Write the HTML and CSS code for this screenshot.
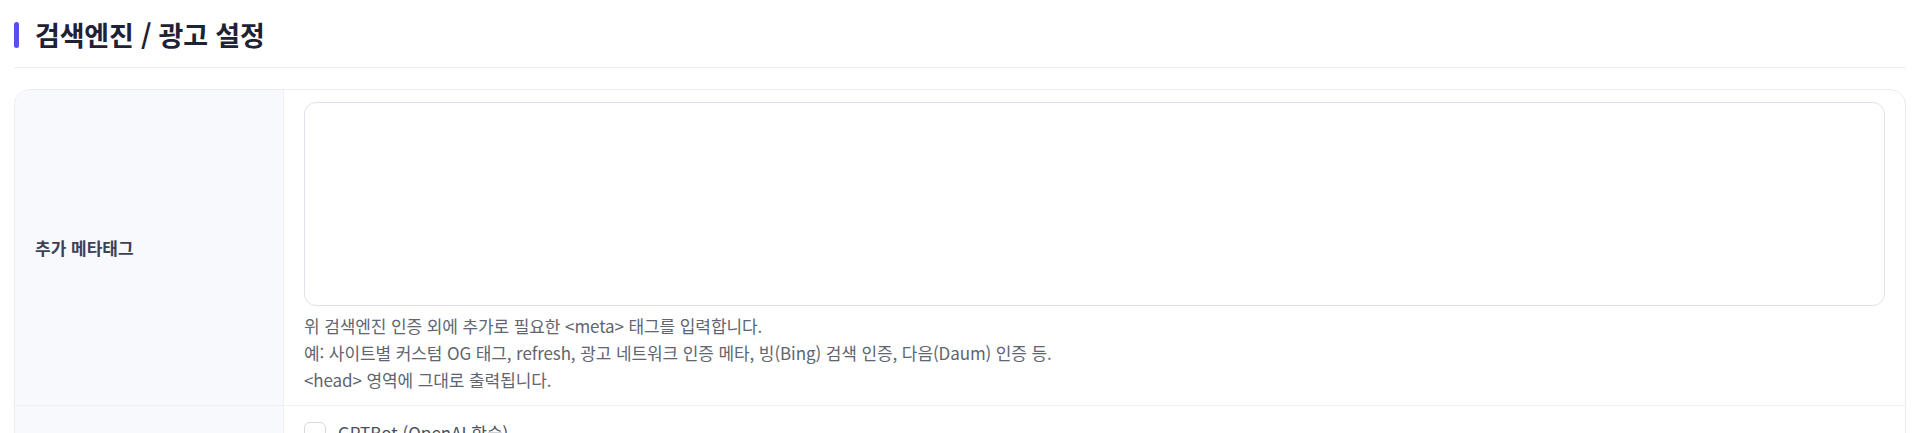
FILE: index.html
```html
<!DOCTYPE html>
<html lang="ko">
<head>
<meta charset="utf-8">
<title>검색엔진 / 광고 설정</title>
<link rel="stylesheet" href="styles.css">
</head>
<body>
<div class="page">
  <div class="section-head">
    <span class="accent"></span>
    <h2 class="section-title">검색엔진 / 광고 설정</h2>
  </div>
  <div class="card">
    <div class="row">
      <div class="label-cell">추가 메타태그</div>
      <div class="field-cell">
        <textarea class="textarea"></textarea>
        <div class="help">
          <div>위 검색엔진 인증 외에 추가로 필요한 &lt;meta&gt; 태그를 입력합니다.</div>
          <div>예: 사이트별 커스텀 OG 태그, refresh, 광고 네트워크 인증 메타, 빙(Bing) 검색 인증, 다음(Daum) 인증 등.</div>
          <div>&lt;head&gt; 영역에 그대로 출력됩니다.</div>
        </div>
      </div>
    </div>
    <div class="row row-sep">
      <div class="label-cell">AI 크롤러 차단</div>
      <div class="field-cell field-checks">
        <label class="check"><span class="box"></span><span>GPTBot (OpenAI 학습)</span></label>
        <label class="check"><span class="box"></span><span>ChatGPT-User (OpenAI)</span></label>
        <label class="check"><span class="box"></span><span>ClaudeBot (Anthropic)</span></label>
      </div>
    </div>
  </div>
</div>
</body>
</html>
```
FILE: styles.css
```css
* { box-sizing: border-box; }
html, body {
  margin: 0;
  padding: 0;
  background: #ffffff;
  font-family: "Noto Sans CJK KR", "Noto Sans", sans-serif;
}
.page {
  padding: 0 14px;
}
.section-head {
  display: flex;
  align-items: center;
  height: 68px;
  border-bottom: 1px solid #eceef2;
  padding-top: 2px;
}
.accent {
  width: 5px;
  height: 26px;
  border-radius: 3px;
  background: #5a4fe6;
  margin-right: 16px;
}
.section-title {
  margin: 0;
  font-size: 27px;
  font-weight: 700;
  color: #1f2235;
  letter-spacing: -0.2px;
}
.card {
  margin-top: 21px;
  border: 1px solid #e9ebf0;
  border-radius: 16px;
  overflow: hidden;
}
.row {
  display: grid;
  grid-template-columns: 269px 1fr;
}
.row-sep {
  border-top: 1px solid #eef0f3;
}
.label-cell {
  background: #f8f9fc;
  border-right: 1px solid #f0f1f5;
  display: flex;
  align-items: center;
  padding: 0 20px;
  font-size: 17px;
  font-weight: 600;
  color: #3c4158;
}
.field-cell {
  padding: 12px 20px 12px 20px;
}
.textarea {
  display: block;
  width: 100%;
  height: 204px;
  border: 1px solid #dfe2e8;
  border-radius: 12px;
  resize: none;
  background: #ffffff;
  font-family: inherit;
  outline: none;
}
.help {
  margin-top: 6px;
  font-size: 17px;
  line-height: 27px;
  color: #60656f;
  letter-spacing: -0.1px;
}
.field-checks {
  padding-top: 14px;
  display: flex;
  flex-direction: column;
  gap: 12px;
}
.check {
  display: flex;
  align-items: center;
  gap: 12px;
  font-size: 17px;
  color: #4a4f5c;
}
.box {
  width: 22px;
  height: 22px;
  border: 1.5px solid #d5d9e0;
  border-radius: 6px;
  background: #ffffff;
}
```
